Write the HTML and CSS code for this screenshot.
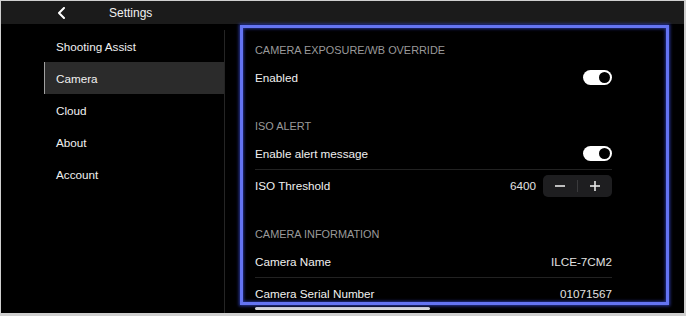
FILE: index.html
```html
<!DOCTYPE html>
<html lang="en">
<head>
    <meta charset="UTF-8">
    <meta name="viewport" content="width=device-width, initial-scale=1.0">
    <title>Settings</title>
    <link rel="stylesheet" href="styles.css">
</head>
<body>
    <div class="screen">
        <header class="topbar">
            <svg class="back" width="10" height="12" viewBox="0 0 10 12">
                <polyline points="7,1 2,6 7,11" fill="none" stroke="#fff" stroke-width="2" stroke-linecap="round" stroke-linejoin="round"/>
            </svg>
            <span class="title">Settings</span>
        </header>
        <div class="main">
            <nav class="sidebar">
                <ul>
                    <li><a href="#">Shooting Assist</a></li>
                    <li class="active"><a href="#">Camera</a></li>
                    <li><a href="#">Cloud</a></li>
                    <li><a href="#">About</a></li>
                    <li><a href="#">Account</a></li>
                </ul>
            </nav>
            <section class="content">
                <div class="group">
                    <h2>Camera Exposure/WB Override</h2>
                    <div class="row">
                        <span>Enabled</span>
                        <span class="toggle"></span>
                    </div>
                </div>
                <div class="group">
                    <h2>ISO Alert</h2>
                    <div class="row">
                        <span>Enable alert message</span>
                        <span class="toggle"></span>
                    </div>
                    <div class="row">
                        <span>ISO Threshold</span>
                        <div class="value-group">
                            <span class="value">6400</span>
                            <div class="stepper">
                                <button type="button">
                                    <svg width="12" height="12" viewBox="0 0 12 12"><line x1="1" y1="6" x2="11" y2="6" stroke="#e6e6e6" stroke-width="1.6"/></svg>
                                </button>
                                <span class="step-divider"></span>
                                <button type="button">
                                    <svg width="12" height="12" viewBox="0 0 12 12"><line x1="1" y1="6" x2="11" y2="6" stroke="#e6e6e6" stroke-width="1.6"/><line x1="6" y1="1" x2="6" y2="11" stroke="#e6e6e6" stroke-width="1.6"/></svg>
                                </button>
                            </div>
                        </div>
                    </div>
                </div>
                <div class="group">
                    <h2>Camera Information</h2>
                    <div class="row">
                        <span>Camera Name</span>
                        <span class="value">ILCE-7CM2</span>
                    </div>
                    <div class="row">
                        <span>Camera Serial Number</span>
                        <span class="value">01071567</span>
                    </div>
                </div>
                <div class="scroll-thumb"></div>
            </section>
            <div class="focus-ring"></div>
        </div>
    </div>
</body>
</html>
```

FILE: styles.css
```css
html, body {
    margin: 0;
    padding: 0;
    background: #d4d4d4;
}
body {
    font-family: "Liberation Sans", Arial, sans-serif;
    color: #f2f2f2;
}
.screen {
    width: 686px;
    height: 316px;
    box-sizing: border-box;
    border: 1px solid #cfcfcf;
    border-right-width: 2px;
    border-bottom-width: 3px;
    background: #000;
    display: flex;
    flex-direction: column;
    overflow: hidden;
}
.topbar {
    height: 23px;
    flex: none;
    background: #1b1b1b;
    display: flex;
    align-items: center;
    font-size: 12px;
}
.topbar .back {
    margin-left: 56px;
}
.topbar .title {
    margin-left: 42px;
    color: #f0f0f0;
}
.main {
    flex: 1;
    display: flex;
    position: relative;
    min-height: 0;
}
.sidebar {
    width: 223px;
    flex: none;
    margin-top: 6px;
    border-right: 1px solid #252525;
}
.sidebar ul {
    list-style: none;
    margin: 0;
    padding: 0;
}
.sidebar li {
    margin-left: 43px;
    height: 32px;
    display: flex;
    align-items: center;
    border-left: 1px solid transparent;
}
.sidebar li a {
    color: #f0f0f0;
    text-decoration: none;
    font-size: 11.7px;
    padding-left: 11px;
}
.sidebar li.active {
    background: #2b2b2b;
    border-left-color: #a0a0a0;
}
.content {
    flex: 1;
    padding: 14px 72px 0 30px;
    position: relative;
}
.group + .group {
    margin-top: 21px;
}
.group h2 {
    margin: 0;
    height: 23px;
    display: flex;
    align-items: center;
    font-size: 10.9px;
    font-weight: normal;
    text-transform: uppercase;
    color: #9a9a9a;
}
.row {
    height: 32px;
    display: flex;
    align-items: center;
    justify-content: space-between;
    font-size: 11.7px;
    color: #f0f0f0;
}
.row + .row {
    border-top: 1px solid #222;
    height: 31px;
}
.value {
    color: #e2e2e2;
}
.value-group {
    display: flex;
    align-items: center;
    gap: 7px;
}
.toggle {
    width: 29px;
    height: 15px;
    border-radius: 8px;
    background: #fff;
    position: relative;
}
.toggle::after {
    content: "";
    position: absolute;
    right: 2px;
    top: 2px;
    width: 11px;
    height: 11px;
    border-radius: 50%;
    background: #000;
}
.stepper {
    width: 69px;
    height: 22px;
    border-radius: 5px;
    background: #1e1e20;
    display: flex;
    align-items: center;
}
.stepper button {
    flex: 1;
    height: 100%;
    background: none;
    border: none;
    padding: 0;
    display: flex;
    align-items: center;
    justify-content: center;
}
.step-divider {
    width: 1px;
    height: 12px;
    background: #3a3a3c;
}
.scroll-thumb {
    position: absolute;
    left: 30px;
    top: 283px;
    width: 175px;
    height: 3px;
    border-radius: 2px;
    background: #d8d8d8;
}
.focus-ring {
    position: absolute;
    left: 239px;
    top: 1px;
    width: 429px;
    height: 280px;
    box-sizing: border-box;
    border: 3px solid #6474f2;
    box-shadow: 0 0 3px 1px rgba(60, 80, 230, 0.7), inset 0 0 3px 1px rgba(60, 80, 230, 0.6);
    pointer-events: none;
}
```
